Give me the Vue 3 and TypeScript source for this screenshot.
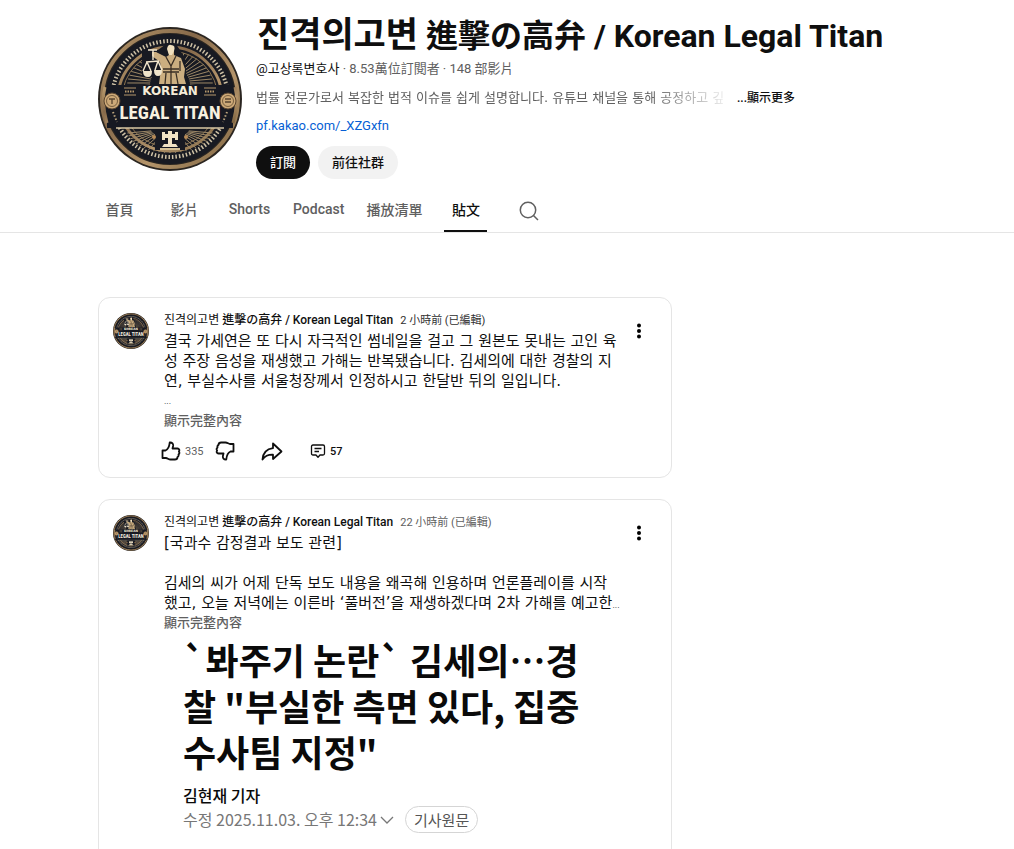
<script setup lang="ts">
import { ref } from 'vue'

interface Tab { id: string; label: string }
interface Post {
  id: number
  age: string
  fresh: boolean
  lines: string[]
  stats?: { likes: number; comments: number }
}

const tabs: Tab[] = [
  { id: 'home', label: '首頁' },
  { id: 'videos', label: '影片' },
  { id: 'shorts', label: 'Shorts' },
  { id: 'podcast', label: 'Podcast' },
  { id: 'playlists', label: '播放清單' },
  { id: 'posts', label: '貼文' },
]
const activeTab = ref('posts')

const posts: Post[] = [
  {
    id: 1,
    age: '2 小時前 (已編輯)',
    fresh: true,
    lines: [
      '결국 가세연은 또 다시 자극적인 썸네일을 걸고 그 원본도 못내는 고인 육',
      '성 주장 음성을 재생했고 가해는 반복됐습니다. 김세의에 대한 경찰의 지',
      '연, 부실수사를 서울청장께서 인정하시고 한달반 뒤의 일입니다.',
    ],
    stats: { likes: 335, comments: 57 },
  },
  {
    id: 2,
    age: '22 小時前 (已編輯)',
    fresh: false,
    lines: [
      '[국과수 감정결과 보도 관련]',
      '',
      '김세의 씨가 어제 단독 보도 내용을 왜곡해 인용하며 언론플레이를 시작',
      '했고, 오늘 저녁에는 이른바 ‘풀버전’을 재생하겠다며 2차 가해를 예고한',
    ],
  },
]

const rays = Array.from({ length: 29 }, (_, i) => {
  const a = Math.PI + (Math.PI * i) / 28
  return {
    x1: 72 + Math.cos(a) * 20,
    y1: 58 + Math.sin(a) * 18,
    x2: 72 + Math.cos(a) * 43,
    y2: 60 + Math.sin(a) * 36,
  }
})
const lowerRays = Array.from({ length: 23 }, (_, i) => {
  const a = (Math.PI * (i + 1)) / 24
  return {
    x1: 72 + Math.cos(a) * 19,
    y1: 103 + Math.sin(a) * 7,
    x2: 72 + Math.cos(a) * 43,
    y2: 103 + Math.sin(a) * 23,
  }
})
</script>

<template>
  <svg class="defs" aria-hidden="true">
    <defs>
      <linearGradient id="gold" x1="0" y1="0" x2="1" y2="1">
        <stop offset="0" stop-color="#b99a6c" />
        <stop offset="0.35" stop-color="#86694a" />
        <stop offset="0.65" stop-color="#b4946a" />
        <stop offset="1" stop-color="#7d6340" />
      </linearGradient>
      <symbol id="emblem" viewBox="0 0 144 144">
        <circle cx="72" cy="72" r="72" fill="#2a2520" />
        <circle cx="72" cy="72" r="68" fill="none" stroke="url(#gold)" stroke-width="4" />
        <circle cx="72" cy="72" r="65" fill="#181a22" />
        <circle cx="72" cy="72" r="58" fill="none" stroke="#cfc2a6" stroke-width="4" stroke-dasharray="1.5 2" />
        <circle cx="72" cy="72" r="52" fill="none" stroke="url(#gold)" stroke-width="3" />
        <circle cx="72" cy="72" r="48" fill="none" stroke="#8b7350" stroke-width="1" />
        <g stroke="#9c8766" stroke-width="1">
          <line v-for="(r, i) in rays" :key="'u' + i" :x1="r.x1" :y1="r.y1" :x2="r.x2" :y2="r.y2" />
          <line v-for="(r, i) in lowerRays" :key="'l' + i" :x1="r.x1" :y1="r.y1" :x2="r.x2" :y2="r.y2" />
        </g>
        <path d="M44 23 H60 L68 17 H78 L87 31 L89 57 H59 L60 50 H44Z" fill="#181a22" />
        <path d="M61 57 L63 42 L62 35 L54 29 L54 25 L58 25 L68 30 L71 28 L70 21 Q72 17 76 21 L76 28 L83 31 L87 42 L86 50 L88 57Z" fill="#cbae80" />
        <path d="M68 30 L73 39 L78 29 M73 39 V57 M65 42 H81 M65 45 H81 M68 46 L67 57 M78 46 L80 57 M82 34 V44" fill="none" stroke="#3a2f24" stroke-width="1.3" />
        <path d="M69 22 Q70 17 73 18 Q78 18 76 24 L74 28 H71Z" fill="#f0dfbd" />
        <path d="M50 23 H59 M55 23 V33 M48 35 L61 34 M49 35 L45 44 M49 35 L53 44 M60 34 L57 43 M60 34 L64 43" fill="none" stroke="#f4e8ce" stroke-width="1.4" />
        <path d="M45 44 H54 Q54 50 50 50 Q45 50 45 44Z M56 43 H64 Q64 49 60 49 Q56 49 56 43Z" fill="#f0e4ca" />
        <path d="M9 58 H135 V101 H9Z" fill="#171922" />
        <path d="M7 60 Q3 74 9 96 M137 60 Q141 74 135 96" fill="none" stroke="url(#gold)" stroke-width="3" />
        <path d="M26 61 H38 M26 68 H38 M106 61 H118 M106 68 H118" stroke="#b7996c" />
        <path d="M27 64.500 H37 M107 64.500 H117" stroke="#b7996c" stroke-width="2" stroke-dasharray="1.500 1" />
        <g fill="#cda978" stroke="#5a4530">
          <circle cx="14" cy="74" r="8" /><circle cx="130" cy="74" r="8" />
        </g>
        <circle cx="14" cy="74" r="5.500" fill="none" stroke="#7a6040" />
        <circle cx="130" cy="74" r="5.500" fill="none" stroke="#7a6040" />
        <path d="M11 72 H17 M14 72 V77 M127 72 H133 M127 75 H133" stroke="#5a4530" stroke-width="1.3" />
        <path d="M18 101 H126" stroke="#d8c7a4" stroke-width="1.3" />
        <path d="M15 85 L19 95 M129 85 L125 95" stroke="#bda57e" stroke-width="2" stroke-dasharray="1.500 2" />
        <path d="M57 102 H87 V123 H57Z" fill="#171922" />
        <path d="M64 105 H67 V107 H70 V104 H74 V107 H77 V105 H80 V113 H77 V111 H74 V117 H78 L80 120 H64 L66 117 H70 V111 H67 V113 H64Z" fill="#f0e2c4" />
        <path d="M62 122 H82" stroke="#d5c096" stroke-width="2" />
        <circle cx="56" cy="110" r="2" fill="#b88b57" /><circle cx="88" cy="110" r="2" fill="#b88b57" />
        <text class="emblem-top" x="72" y="68">KOREAN</text>
        <text class="emblem-main" x="72" y="92">LEGAL TITAN</text>
      </symbol>
    </defs>
  </svg>

  <header class="channel wrap">
    <svg class="channel-logo" role="img" aria-label="Korean Legal Titan"><use href="#emblem" /></svg>
    <div class="channel-info">
      <h1><span class="title-ko">진격의고변</span> 進擊の高弁 / Korean Legal Titan</h1>
      <p class="meta"><span class="handle">@고상록변호사</span> · 8.53萬位訂閱者 · 148 部影片</p>
      <div class="about">
        <p class="about-text">법률 전문가로서 복잡한 법적 이슈를 쉽게 설명합니다. 유튜브 채널을 통해 공정하고 깊</p>
        <button type="button" class="about-more">...顯示更多</button>
      </div>
      <a class="site" href="#kakao">pf.kakao.com/_XZGxfn</a>
      <div class="cta">
        <button type="button" class="pill dark">訂閱</button>
        <button type="button" class="pill">前往社群</button>
      </div>
    </div>
  </header>

  <nav class="tabbar" aria-label="頻道">
    <div class="tabs wrap">
      <button v-for="t in tabs" :key="t.id" type="button" class="tab" :class="{ active: t.id === activeTab }" @click="activeTab = t.id">{{ t.label }}</button>
      <button type="button" class="search" aria-label="搜尋">
        <svg width="20" height="20" viewBox="0 0 20 20" fill="none" stroke="#606060" stroke-width="1.500"><circle cx="9" cy="9" r="7.700" /><path d="M14.500 14.500 L19 19" /></svg>
      </button>
    </div>
  </nav>

  <main class="feed wrap">
    <article v-for="post in posts" :key="post.id" class="post">
      <svg class="post-avatar" aria-hidden="true"><use href="#emblem" /></svg>
      <div class="post-main">
        <div class="post-head">
          <a class="author" href="#channel"><span class="author-ko">진격의고변</span> 進擊の高弁 / Korean Legal Titan</a>
          <a class="age" :class="{ fresh: post.fresh }" href="#post">{{ post.age }}</a>
        </div>
        <div class="copy">
          <p v-for="(line, i) in post.lines" :key="i">{{ line }}<span v-if="!post.stats && i === post.lines.length - 1" class="dots">...</span></p>
          <p v-if="post.stats" class="dots">...</p>
        </div>
        <button type="button" class="expand">顯示完整內容</button>

        <div v-if="post.stats" class="actions">
          <button type="button" class="like" aria-label="喜歡">
            <svg width="20" height="20" viewBox="0 0 20 20"><path d="M1.500 9.500 H4.500 C6.800 8.500 8.300 6 8.700 1.500 C11.300 1.300 12.400 3 12.100 5 L11.500 7.500 H16.500 C18.300 7.600 18.800 9.200 17.900 10.500 C18.600 11.500 18.400 12.700 17.500 13.400 C17.800 14.600 17.400 15.600 16.500 16.100 C16.400 17.700 15.400 18.500 13.900 18.500 H9.500 C7.500 18.500 6.500 17 5 17 H1.500 Z" /></svg>
          </button>
          <span class="likes">{{ post.stats.likes }}</span>
          <button type="button" class="dislike" aria-label="不喜歡">
            <svg width="20" height="20" viewBox="0 0 20 20"><path d="M18.500 10.500 H15.500 C13.200 11.500 11.700 14 11.300 18.500 C8.700 18.700 7.600 17 7.900 15 L8.500 12.500 H3.500 C1.700 12.400 1.200 10.800 2.100 9.500 C1.400 8.500 1.600 7.300 2.500 6.600 C2.200 5.400 2.600 4.400 3.500 3.900 C3.600 2.300 4.600 1.500 6.100 1.500 H10.500 C12.500 1.500 13.500 3 15 3 H18.500 Z" /></svg>
          </button>
          <button type="button" class="share" aria-label="分享">
            <svg width="22" height="20" viewBox="0 0 22 20"><path d="M12 2.500 L20.500 10.500 L12 18 V13.700 C7.500 13.500 4 15 1.500 18.500 C2 12 6 8 12 7.200 Z" /></svg>
          </button>
          <button type="button" class="comments">
            <svg width="16" height="16" viewBox="0 0 16 16"><path class="thin" d="M3 2 H13 Q14.500 2 14.500 3.500 V10.500 Q14.500 12 13 12 H10 L8 14.300 L6 12 H3 Q1.500 12 1.500 10.500 V3.500 Q1.500 2 3 2 Z M4.500 5.500 H11.500 M4.500 8.500 H9" /></svg>
            {{ post.stats.comments }}
          </button>
        </div>

        <section v-else class="clip">
          <h2>`봐주기 논란` 김세의⋯경<br />찰 "부실한 측면 있다, 집중<br />수사팀 지정"</h2>
          <p class="reporter">김현재 기자</p>
          <div class="stamp">
            <span>수정 2025.11.03. 오후 12:34</span>
            <svg width="14" height="8" viewBox="0 0 14 8" fill="none" stroke="#777" stroke-width="1.300"><path d="M1 1 L7 7 L13 1" /></svg>
            <a class="source" href="#source">기사원문</a>
          </div>
        </section>
      </div>
      <button type="button" class="menu" aria-label="動作選單">
        <svg width="6" height="18" viewBox="0 0 6 18"><circle cx="3" cy="3.500" r="2" /><circle cx="3" cy="9" r="2" /><circle cx="3" cy="14.500" r="2" /></svg>
      </button>
    </article>
  </main>
</template>

<style>
body {
  margin: 0;
  background: #fff;
  color: #0f0f0f;
  font-family: Roboto, "Noto Sans CJK TC", "Noto Sans CJK KR", sans-serif;
}
</style>

<style scoped>
h1, h2, p { margin: 0; }
a { color: inherit; text-decoration: none; }
button {
  padding: 0;
  border: 0;
  background: none;
  color: inherit;
  font-family: inherit;
  cursor: pointer;
}
svg { display: block; }
.defs { position: absolute; width: 0; height: 0; }
.wrap {
  width: min(818px, calc(100% - 32px));
  margin: 0 auto;
}

.emblem-top {
  font: bold 12px "DejaVu Sans", sans-serif;
  fill: #f5ecd8;
  text-anchor: middle;
}
.emblem-main {
  font: bold 19px "Liberation Sans Narrow", "Roboto Condensed", Roboto, sans-serif;
  fill: #f8f1e0;
  text-anchor: middle;
}

.channel {
  display: flex;
  align-items: center;
  gap: 14px;
  padding-top: 19px;
}
.channel-logo { width: 144px; height: 144px; flex: none; }
.channel-info { min-width: 0; }
h1 {
  margin-bottom: 6px;
  padding-left: 1px;
  font-size: 32px;
  line-height: 34px;
  font-weight: 700;
  white-space: nowrap;
}
.title-ko { font-size: 35px; }
.meta {
  font-size: 13px;
  line-height: 20px;
  color: #606060;
}
.handle { color: #0f0f0f; }
.about {
  display: flex;
  align-items: center;
  margin-top: 9px;
  line-height: 20px;
}
.about-text {
  width: 478px;
  overflow: hidden;
  white-space: nowrap;
  color: #606060;
  font-family: "DejaVu Sans", "Noto Sans CJK KR", sans-serif;
  font-size: 13px;
  mask-image: linear-gradient(to right, #000 82%, transparent);
}
.about-more {
  margin-left: 3px;
  font-size: 12px;
  font-weight: 500;
  line-height: 20px;
  white-space: nowrap;
}
.site {
  display: inline-block;
  margin-top: 8px;
  font-size: 13px;
  line-height: 20px;
  color: #065fd4;
}
.cta { display: flex; gap: 8px; margin-top: 10px; }
.pill {
  height: 33px;
  padding: 0 14px 3px;
  border-radius: 17px;
  background: #f2f2f2;
  font-size: 13px;
  font-weight: 500;
}
.pill.dark { background: #0f0f0f; color: #fff; }

.tabbar { margin-top: 10px; border-bottom: 1px solid #e5e5e5; }
.tabs { display: flex; gap: 22px; height: 43px; }
.tab {
  min-width: 43px;
  padding-bottom: 3px;
  border-top: 2px solid transparent;
  border-bottom: 2px solid transparent;
  color: #606060;
  font-size: 14px;
  font-weight: 500;
  white-space: nowrap;
}
.tab.active { color: #0f0f0f; border-bottom-color: #0f0f0f; }
.search { margin-left: 10px; }

.feed {
  display: flex;
  flex-direction: column;
  gap: 21px;
  padding-top: 64px;
}
.post {
  display: flex;
  align-items: flex-start;
  box-sizing: border-box;
  max-width: 574px;
  padding: 14px 14px 6px;
  border: 1px solid #e5e5e5;
  border-radius: 12px;
}
.post-avatar { width: 36px; height: 36px; flex: none; margin: 1px 15px 0 0; }
.post-main { flex: 1; min-width: 0; }
.post-head {
  display: flex;
  align-items: center;
  gap: 7px;
  height: 17px;
  margin-bottom: 2px;
  font-size: 12px;
  line-height: 17px;
  white-space: nowrap;
}
.author { font-weight: 500; }
.author-ko { font-weight: 400; }
.age { font-size: 11px; color: #606060; }
.age.fresh { color: #303030; }
.copy {
  font-family: "DejaVu Sans", "Noto Sans CJK KR", sans-serif;
  font-size: 15px;
  line-height: 20px;
  white-space: nowrap;
}
.copy p { height: 20px; }
.dots { font-family: Roboto, sans-serif; font-size: 9px; color: #303030; }
.expand {
  display: block;
  height: 20px;
  font-size: 13px;
  font-weight: 500;
  line-height: 20px;
  color: #606060;
}
.menu {
  display: flex;
  justify-content: center;
  width: 36px;
  padding-top: 10px;
}
.actions {
  display: flex;
  align-items: center;
  height: 40px;
  margin-left: -3px;
}
.actions svg { fill: none; stroke: #0f0f0f; stroke-width: 1.8; stroke-linejoin: round; }
.actions .thin { stroke-width: 1.3; }
.likes { width: 30px; margin-left: 4px; font-size: 11px; color: #606060; }
.share { margin-left: 26px; }
.comments {
  display: flex;
  align-items: center;
  gap: 4px;
  margin-left: 27px;
  font-size: 11px;
  font-weight: 500;
}

.clip {
  padding: 3px 0 40px 19px;
  color: #0a0a0a;
  font-family: "Noto Sans CJK KR", sans-serif;
  white-space: nowrap;
}
.clip h2 { font-size: 36px; line-height: 46px; font-weight: 700; }
.reporter {
  margin-top: 10px;
  font-size: 16px;
  line-height: 22px;
  font-weight: 500;
}
.stamp {
  display: flex;
  align-items: center;
  gap: 3px;
  color: #777;
  font-size: 16px;
  line-height: 25px;
}
.source {
  margin-left: 8px;
  padding: 0 8px;
  border: 1px solid #d5d5d5;
  border-radius: 14px;
  font-size: 15px;
  color: #555;
}
</style>
